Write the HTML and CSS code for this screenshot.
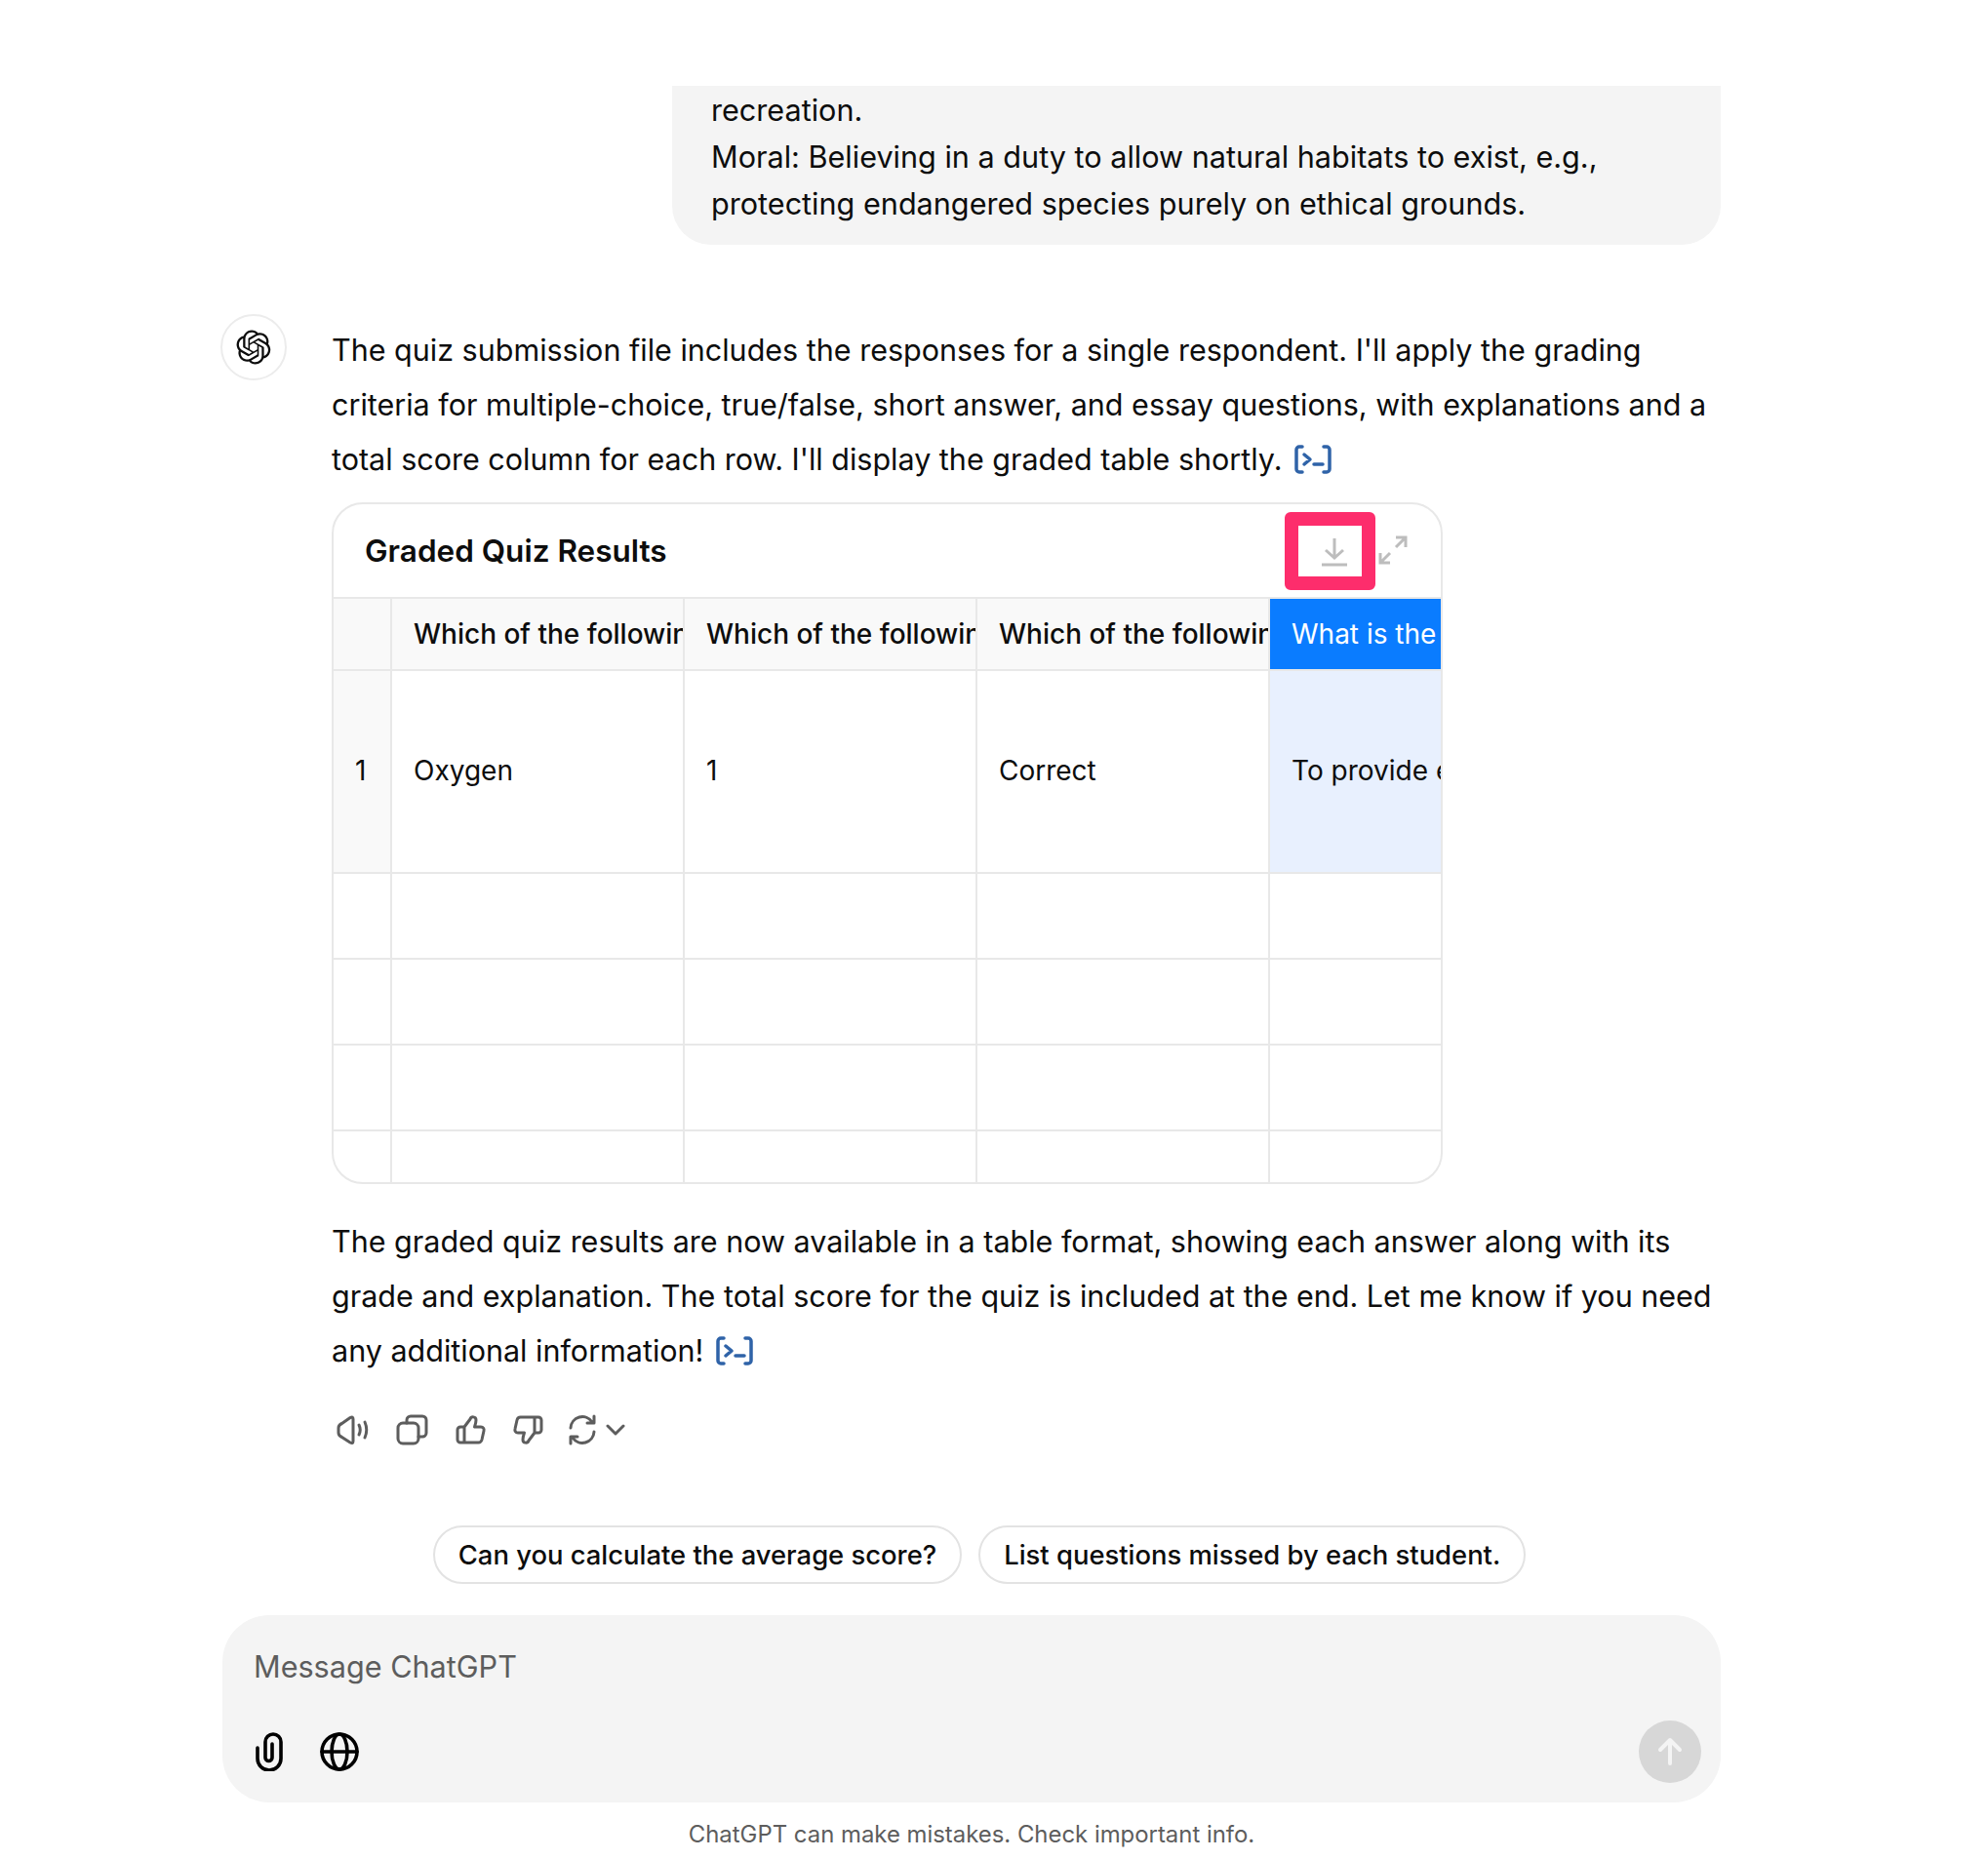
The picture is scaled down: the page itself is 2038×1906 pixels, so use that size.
FILE: index.html
```html
<!DOCTYPE html>
<html lang="en">
<head>
  <meta charset="UTF-8" />
  <meta name="viewport" content="width=device-width, initial-scale=1" />
  <title>ChatGPT</title>
  <link rel="stylesheet" href="styles.css">
</head>
<body>
  <div class="chat">
    <div class="user-row">
      <div class="bubble">
        recreation.<br>
        Moral: Believing in a duty to allow natural habitats to exist, e.g.,<br>
        protecting endangered species purely on ethical grounds.
      </div>
    </div>

    <div class="reply">
      <div class="avatar">
        <svg width="36" height="36" viewBox="0 0 41 41" fill="#0d0d0d"><path d="M37.5324 16.8707C37.9808 15.5241 38.1363 14.0974 37.9886 12.6859C37.8409 11.2744 37.3934 9.91076 36.676 8.68622C35.6126 6.83404 33.9882 5.3676 32.0373 4.4985C30.0864 3.62941 27.9098 3.40259 25.8215 3.85078C24.8796 2.7893 23.7219 1.94125 22.4257 1.36341C21.1295 0.785575 19.7249 0.491269 18.3058 0.500197C16.1708 0.495044 14.0893 1.16803 12.3614 2.42214C10.6335 3.67624 9.34853 5.44666 8.6917 7.47815C7.30085 7.76286 5.98686 8.3414 4.8377 9.17505C3.68854 10.0087 2.73073 11.0782 2.02839 12.312C0.956464 14.1591 0.498905 16.2988 0.721698 18.4228C0.944492 20.5467 1.83612 22.5449 3.268 24.1293C2.81966 25.4759 2.66413 26.9026 2.81182 28.3141C2.95951 29.7256 3.40701 31.0892 4.12437 32.3138C5.18791 34.1659 6.8123 35.6322 8.76321 36.5013C10.7141 37.3704 12.8907 37.5973 14.9789 37.1492C15.9208 38.2107 17.0786 39.0587 18.3747 39.6366C19.6709 40.2144 21.0755 40.5087 22.4946 40.4998C24.6307 40.5054 26.7133 39.8321 28.4418 38.5772C30.1704 37.3223 31.4556 35.5506 32.1119 33.5179C33.5027 33.2332 34.8167 32.6547 35.9659 31.821C37.115 30.9874 38.0728 29.9178 38.7752 28.684C39.8458 26.8371 40.3023 24.6979 40.0789 22.5748C39.8556 20.4517 38.9639 18.4544 37.5324 16.8707ZM22.4978 37.8849C20.7443 37.8874 19.0459 37.2733 17.6994 36.1501C17.7601 36.117 17.8666 36.0586 17.936 36.0161L25.9004 31.4156C26.1003 31.3019 26.2663 31.137 26.3813 30.9378C26.4964 30.7386 26.5563 30.5124 26.5549 30.2825V19.0542L29.9213 20.998C29.9389 21.0068 29.9541 21.0198 29.9656 21.0359C29.977 21.052 29.9842 21.0707 29.9867 21.0902V30.3889C29.9842 32.375 29.1946 34.2791 27.7909 35.6841C26.3872 37.0892 24.4838 37.8806 22.4978 37.8849ZM6.39227 31.0064C5.51397 29.4888 5.19742 27.7107 5.49804 25.9832C5.55718 26.0187 5.66048 26.0818 5.73461 26.1244L13.699 30.7248C13.8975 30.8408 14.1233 30.902 14.3532 30.902C14.583 30.902 14.8088 30.8408 15.0073 30.7248L24.731 25.1103V28.9979C24.7321 29.0177 24.7283 29.0376 24.7199 29.0556C24.7115 29.0736 24.6988 29.0893 24.6829 29.1012L16.6317 33.7497C14.9096 34.7416 12.8643 35.0097 10.9447 34.4954C9.02506 33.9811 7.38785 32.7263 6.39227 31.0064ZM4.29707 13.6194C5.17156 12.0998 6.55279 10.9364 8.19885 10.3327C8.19885 10.4013 8.19491 10.5228 8.19491 10.6071V19.808C8.19351 20.0378 8.25334 20.2638 8.36823 20.4629C8.48312 20.6619 8.64893 20.8267 8.84863 20.9404L18.5723 26.5542L15.206 28.4979C15.1894 28.5089 15.1703 28.5155 15.1505 28.5173C15.1307 28.5191 15.1107 28.516 15.0924 28.5082L7.04046 23.8557C5.32135 22.8601 4.06716 21.2235 3.55289 19.3046C3.03862 17.3858 3.30624 15.3413 4.29707 13.6194ZM31.955 20.0556L22.2312 14.4411L25.5976 12.4981C25.6142 12.4872 25.6333 12.4805 25.6531 12.4787C25.6729 12.4769 25.6928 12.4801 25.7111 12.4879L33.7631 17.1364C34.9967 17.849 36.0017 18.8982 36.6606 20.1613C37.3194 21.4244 37.6047 22.849 37.4832 24.2684C37.3617 25.6878 36.8382 27.0432 35.9743 28.1759C35.1103 29.3086 33.9415 30.1717 32.6047 30.6641C32.6047 30.5947 32.6047 30.4733 32.6047 30.3889V21.188C32.6066 20.9586 32.5474 20.7328 32.4332 20.5338C32.319 20.3348 32.154 20.1698 31.955 20.0556ZM35.3055 15.0128C35.2464 14.9765 35.1431 14.9142 35.069 14.8717L27.1045 10.2712C26.906 10.1554 26.6803 10.0943 26.4504 10.0943C26.2206 10.0943 25.9948 10.1554 25.7963 10.2712L16.0726 15.8858V11.9982C16.0715 11.9783 16.0753 11.9585 16.0837 11.9405C16.0921 11.9225 16.1048 11.9068 16.1207 11.8949L24.1719 7.25025C25.4053 6.53903 26.8158 6.19376 28.2383 6.25482C29.6608 6.31589 31.0364 6.78077 32.2044 7.59508C33.3723 8.40939 34.2842 9.53945 34.8334 10.8531C35.3826 12.1667 35.5464 13.6095 35.3055 15.0128ZM14.2424 21.9419L10.8752 19.9981C10.8576 19.9893 10.8423 19.9763 10.8309 19.9602C10.8195 19.9441 10.8122 19.9254 10.8098 19.9058V10.6071C10.8107 9.18295 11.2173 7.78848 11.9819 6.58696C12.7466 5.38544 13.8377 4.42659 15.1275 3.82264C16.4173 3.21869 17.8524 2.99464 19.2649 3.1767C20.6775 3.35876 22.0089 3.93941 23.1034 4.85067C23.0427 4.88379 22.937 4.94215 22.8668 4.98473L14.9024 9.58517C14.7025 9.69878 14.5366 9.86356 14.4215 10.0626C14.3065 10.2616 14.2466 10.4877 14.2479 10.7175L14.2424 21.9419ZM16.071 17.9991L20.4018 15.4978L24.7325 17.9975V22.9985L20.4018 25.4983L16.071 22.9985V17.9991Z"/></svg>
      </div>

      <div class="reply-body">
        <p class="reply-text">
          The quiz submission file includes the responses for a single respondent. I'll apply the grading criteria for multiple-choice, true/false, short answer, and essay questions, with explanations and a total score column for each row. I'll display the graded table shortly.
          <svg class="cite" viewBox="0 0 40 30" fill="none"><path d="M9 2H6a3 3 0 0 0-3 3v20a3 3 0 0 0 3 3h3M31 2h3a3 3 0 0 1 3 3v20a3 3 0 0 1-3 3h-3M11 10l6 5-6 5M21 20h9"/></svg>
        </p>

        <div class="sheet">
          <div class="sheet-head">
            <div class="sheet-title">Graded Quiz Results</div>
            <div class="sheet-actions">
              <div class="download-mark">
                <svg width="36" height="36" viewBox="0 0 36 36" fill="none" stroke="#bdbdbd" stroke-width="3"><path d="M18 5v20M9 17l9 8 9-8M5 32h26"/></svg>
              </div>
              <svg class="expand" width="30" height="30" viewBox="0 0 30 30" fill="none" stroke="#bdbdbd" stroke-width="3"><path d="M18 12L28 2M18 2h10v10M12 18L2 28M2 18v10h10"/></svg>
            </div>
          </div>

          <table class="grid">
            <colgroup>
              <col class="col-num"><col class="col-q"><col class="col-q"><col class="col-q"><col>
            </colgroup>
            <tr class="head-row">
              <th></th>
              <th>Which of the following</th>
              <th>Which of the following</th>
              <th>Which of the following</th>
              <th class="picked">What is the purpose</th>
            </tr>
            <tr class="data-row">
              <td class="num">1</td>
              <td>Oxygen</td>
              <td>1</td>
              <td>Correct</td>
              <td class="picked-cell">To provide energy</td>
            </tr>
            <tr class="empty-row"><td></td><td></td><td></td><td></td><td></td></tr>
            <tr class="empty-row"><td></td><td></td><td></td><td></td><td></td></tr>
            <tr class="empty-row"><td></td><td></td><td></td><td></td><td></td></tr>
            <tr class="last-row"><td></td><td></td><td></td><td></td><td></td></tr>
          </table>
        </div>

        <p class="reply-text after-table">
          The graded quiz results are now available in a table format, showing each answer along with its grade and explanation. The total score for the quiz is included at the end. Let me know if you need any additional information!
          <svg class="cite" viewBox="0 0 40 30" fill="none"><path d="M9 2H6a3 3 0 0 0-3 3v20a3 3 0 0 0 3 3h3M31 2h3a3 3 0 0 1 3 3v20a3 3 0 0 1-3 3h-3M11 10l6 5-6 5M21 20h9"/></svg>
        </p>

        <div class="msg-actions">
          <svg class="act" viewBox="0 0 36 36"><path d="M15 5.500 6.500 11.500Q3 13 3 16V21Q3 24 6.500 25.500L15 31Q18 32.500 18 29.500V7Q18 4 15 5.500Z"/><path d="M24 13q2.500 5 0 10M30 10q3.500 8 0 16"/></svg>
          <svg class="act" viewBox="0 0 36 36"><rect x="4" y="11" width="21" height="21" rx="5"/><path d="M13 11V8a4 4 0 0 1 4-4h12a4 4 0 0 1 4 4v13a4 4 0 0 1-4 4h-4"/></svg>
          <svg class="act" viewBox="0 0 36 36"><path d="M12 15H8a3 3 0 0 0-3 3v10a3 3 0 0 0 3 3h4zM12 15l6-8c1-3 6-3 6 1 0 2-.5 4-1.500 7H29c2.500 0 3.500 2 3 4l-2 9c-.5 2-1.500 3-3.500 3H12"/></svg>
          <svg class="act" viewBox="0 0 36 36"><g transform="rotate(180 18 18)"><path d="M12 15H8a3 3 0 0 0-3 3v10a3 3 0 0 0 3 3h4zM12 15l6-8c1-3 6-3 6 1 0 2-.5 4-1.500 7H29c2.500 0 3.500 2 3 4l-2 9c-.5 2-1.500 3-3.500 3H12"/></g></svg>
          <svg class="act regen" viewBox="0 0 36 36"><path d="M6 16A12 12 0 0 1 28 10M30 4v7h-7M30 20A12 12 0 0 1 8 26M6 32v-7h7"/></svg>
          <svg class="act chev" viewBox="0 0 20 12"><path d="M2 2l8 8 8-8"/></svg>
        </div>
      </div>
    </div>

    <div class="suggestions">
      <div class="pill">Can you calculate the average score?</div>
      <div class="pill">List questions missed by each student.</div>
    </div>

    <div class="composer">
      <div class="placeholder">Message ChatGPT</div>
      <div class="composer-tools">
        <svg class="tool" width="40" height="40" viewBox="0 0 40 40"><path d="M4 16V27a12 12 0 0 0 24 0V10a8 8 0 0 0-16 0V26a3.500 3.500 0 0 0 7 0V12"/></svg>
        <svg class="tool" width="40" height="40" viewBox="0 0 40 40"><circle cx="20" cy="20" r="18"/><ellipse cx="20" cy="20" rx="8" ry="18"/><path d="M2 20h36"/></svg>
        <div class="send">
          <svg width="32" height="32" viewBox="0 0 32 32" fill="none" stroke="#f4f4f4" stroke-width="4" stroke-linecap="round" stroke-linejoin="round"><path d="M16 28V5M6 14l10-10 10 10"/></svg>
        </div>
      </div>
    </div>

    <div class="disclaimer">ChatGPT can make mistakes. Check important info.</div>
  </div>
</body>
</html>
```

FILE: styles.css
```css
body {
  margin: 0;
  background: #fff;
  color: #0d0d0d;
  font-family: Inter, "Liberation Sans", sans-serif;
}
.chat {
  width: 1536px;
  margin-left: 228px;
  padding-top: 88px;
}

/* user message */
.user-row {
  display: flex;
  justify-content: flex-end;
}
.bubble {
  width: 1075px;
  box-sizing: border-box;
  height: 163px;
  padding: 1px 40px 0;
  background: #f4f4f4;
  border-radius: 0 0 40px 40px;
  font-size: 30.6px;
  line-height: 48px;
}

/* assistant message */
.reply {
  display: flex;
  margin-top: 71px;
}
.avatar {
  flex: none;
  box-sizing: border-box;
  width: 68px;
  height: 68px;
  margin-left: -2px;
  margin-right: 46px;
  border: 2px solid #ececec;
  border-radius: 50%;
  display: flex;
  align-items: center;
  justify-content: center;
}
.reply-body {
  flex: 1;
  padding-top: 9px;
}
.reply-text {
  margin: 0;
  font-size: 30.5px;
  line-height: 56px;
}
.after-table {
  margin-top: 31px;
}
.cite {
  width: 40px;
  height: 30px;
  margin-left: 3px;
  vertical-align: -4px;
  stroke: #2f63a8;
  stroke-width: 3.5;
  stroke-linecap: round;
  stroke-linejoin: round;
}

/* table card */
.sheet {
  width: 1139px;
  height: 699px;
  margin-top: 16px;
  border: 2px solid #e8e8e8;
  border-radius: 32px;
  overflow: hidden;
  box-sizing: border-box;
}
.sheet-head {
  height: 95px;
  display: flex;
  align-items: center;
  justify-content: space-between;
  padding: 0 34px 0 32px;
}
.sheet-title {
  font-size: 31.5px;
  font-weight: 600;
}
.sheet-actions {
  display: flex;
  align-items: center;
}
.download-mark {
  box-sizing: border-box;
  width: 93px;
  height: 80px;
  border: 14px solid #fd2d6c;
  border-radius: 6px;
  display: flex;
  align-items: center;
  justify-content: center;
  margin-right: 1px;
  padding-left: 8px;
}
.expand {
  margin-left: 2px;
  margin-bottom: 2px;
}
.grid {
  width: 100%;
  table-layout: fixed;
  border-collapse: collapse;
  font-size: 28px;
}
.col-num {
  width: 59px;
}
.col-q {
  width: 300px;
}
.grid th,
.grid td {
  border: 2px solid #e8e8e8;
  padding: 0 0 0 22px;
  overflow: hidden;
  white-space: nowrap;
  text-align: left;
}
.grid tr > :first-child {
  border-left: 0;
}
.grid tr > :last-child {
  border-right: 0;
}
.grid tr:last-child > * {
  border-bottom: 0;
}
.grid th {
  background: #f9f9f9;
  font-weight: 500;
}
.grid td {
  padding-bottom: 2px;
}
.grid td.num {
  background: #f9f9f9;
}
.head-row {
  height: 74px;
}
.data-row {
  height: 208px;
}
.empty-row {
  height: 88px;
}
.last-row {
  height: 55px;
}
.grid th.picked {
  background: #0a7cff;
  color: #fff;
  font-weight: 400;
}
.grid td.picked-cell {
  background: #e8f0fe;
}

/* feedback icons */
.msg-actions {
  display: flex;
  align-items: center;
  gap: 24px;
  margin-top: 35px;
  margin-left: 4px;
}
.act {
  width: 36px;
  height: 36px;
  fill: none;
  stroke: #5d5d5d;
  stroke-width: 3;
  stroke-linecap: round;
  stroke-linejoin: round;
}
.regen {
  margin-left: -5px;
}
.chev {
  width: 20px;
  height: 12px;
  margin-left: -18px;
}

/* suggestions */
.suggestions {
  display: flex;
  justify-content: center;
  gap: 17px;
  padding-left: 16px;
  margin-top: 80px;
}
.pill {
  height: 60px;
  box-sizing: border-box;
  padding: 0 24px;
  border: 2px solid #e3e3e3;
  border-radius: 30px;
  display: flex;
  align-items: center;
  font-size: 27.4px;
  font-weight: 450;
}

/* composer */
.composer {
  height: 192px;
  box-sizing: border-box;
  margin-top: 32px;
  padding: 32px 20px 0 32px;
  background: #f4f4f4;
  border-radius: 48px;
}
.placeholder {
  font-size: 30.6px;
  line-height: 42px;
  color: #5d5d5d;
}
.composer-tools {
  display: flex;
  align-items: center;
  gap: 28px;
  margin-top: 34px;
}
.tool {
  fill: none;
  stroke: #000;
  stroke-width: 3.6;
  stroke-linecap: round;
}
.send {
  margin-left: auto;
  width: 64px;
  height: 64px;
  border-radius: 50%;
  background: #d7d7d7;
  display: flex;
  align-items: center;
  justify-content: center;
}
.disclaimer {
  margin-top: 17px;
  text-align: center;
  font-size: 23.9px;
  line-height: 32px;
  color: #5d5d5d;
}
```
